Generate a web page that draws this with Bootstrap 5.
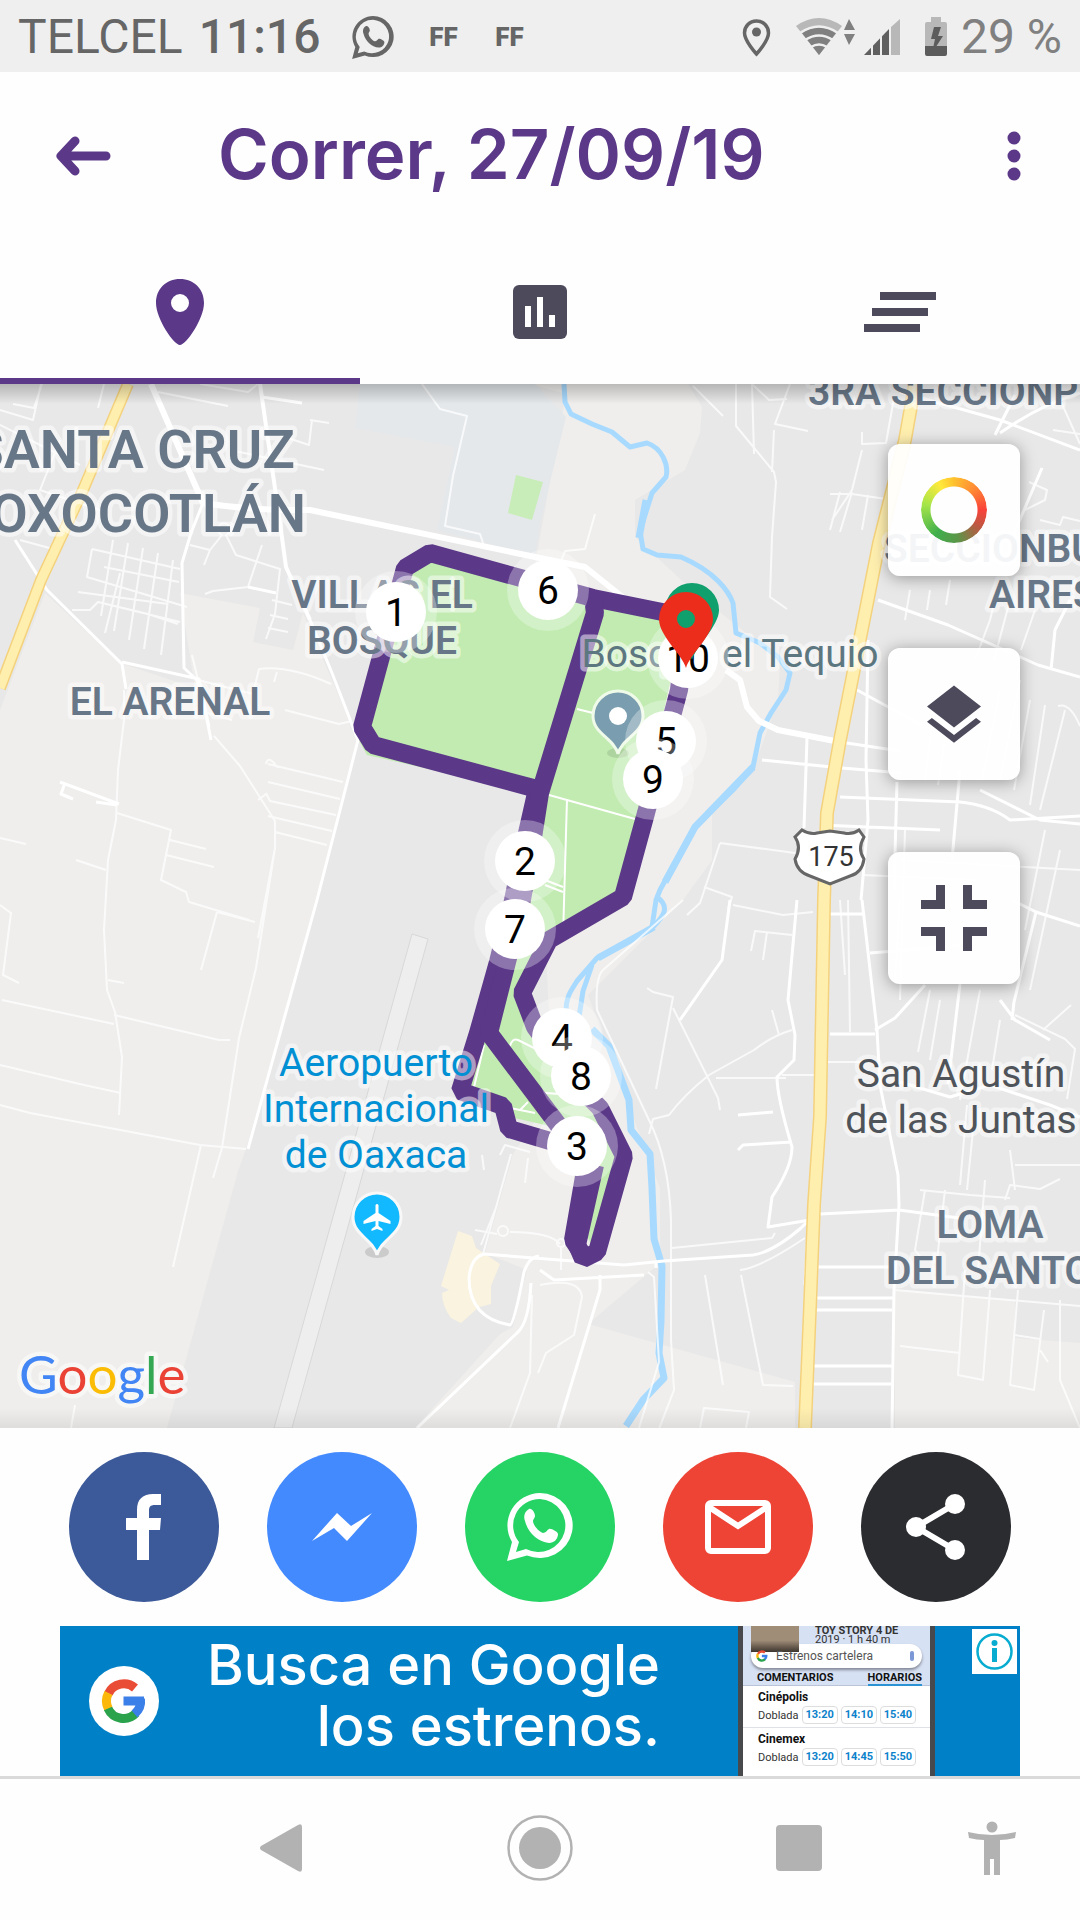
<!DOCTYPE html>
<html lang="es">
<head>
    <meta charset="UTF-8" />
    <meta name="viewport" content="width=device-width, initial-scale=1.0" />
    <title>Correr, 27/09/19</title>
    <link href="https://cdn.jsdelivr.net/npm/bootstrap@5.3.3/dist/css/bootstrap.min.css" rel="stylesheet">
    <style>
        :root {
            --morado: #5b3888;
            --tinta: #4d4a5c;
        }

        body {
            font-family: Roboto, sans-serif;
            background-color: #fefefe;
            overflow-x: hidden;
        }

        svg {
            display: block;
            flex-shrink: 0;
        }

        /* Barra de estado */
        .estado {
            height: 72px;
            padding: 2px 18px 0;
            background-color: #efefef;
            color: #666;
            font-size: 48px;
            line-height: 70px;
        }

        .estado .reloj {
            margin: 0 32px 0 16px;
            font-weight: 500;
        }

        .estado .app-ff {
            margin-left: 32px;
            width: 34px;
            font-size: 26px;
            font-weight: 900;
            text-align: center;
        }

        .estado .bateria {
            margin-left: 13px;
            color: #808080;
        }

        /* Encabezado */
        .encabezado {
            height: 168px;
            padding: 0 57px 0 55px;
            color: var(--morado);
        }

        .encabezado h1 {
            margin: 0 auto 4px 107px;
            font-family: Inter, sans-serif;
            font-size: 69px;
            font-weight: 600;
            line-height: 80px;
        }

        .boton-liso {
            padding: 0;
            border: 0;
            background: none;
            color: inherit;
        }

        .pestanas .nav-link {
            height: 144px;
            padding: 6px 0 0;
            border-bottom: 6px solid transparent;
            border-radius: 0;
            color: var(--tinta);
        }

        .pestanas .nav-link.active {
            background: none;
            border-color: var(--morado);
            color: var(--morado);
        }

        /* Mapa */
        .mapa {
            min-height: 900px;
            overflow: hidden;
            background-color: #e8e8e8;
        }

        .mapa::after {
            content: "";
            position: absolute;
            inset: 0;
            pointer-events: none;
            background: linear-gradient(rgba(0, 0, 0, .22), transparent 20px, transparent calc(100% - 20px), rgba(0, 0, 0, .07));
        }

        .lienzo {
            position: absolute;
            width: 100%;
            height: 100%;
        }

        .lienzo text {
            font-size: 39px;
            text-anchor: middle;
            paint-order: stroke;
            stroke: rgba(255, 255, 255, .5);
            stroke-width: 9px;
            stroke-linejoin: round;
        }

        .lienzo .colonia {
            fill: #687788;
            font-weight: 600;
        }

        .lienzo .ciudad {
            font-size: 54px;
            text-anchor: end;
        }

        .lienzo .inicio {
            text-anchor: start;
        }

        .lienzo .km text,
        .lienzo .ruta175 {
            stroke: none;
        }

        .lienzo .ruta175 {
            font-size: 27px;
            fill: #333;
        }

        .lienzo .logo {
            font-family: Lato, sans-serif;
            font-size: 53px;
            text-anchor: start;
        }

        .controles {
            position: absolute;
            top: 60px;
            right: 60px;
            gap: 72px;
            z-index: 1;
        }

        .controles .btn {
            width: 132px;
            height: 132px;
            border: 0;
            border-radius: 12px;
            background-color: rgba(255, 255, 255, .93);
            box-shadow: 0 2px 16px rgba(0, 0, 0, .35);
            color: var(--tinta);
        }

        .aro {
            width: 66px;
            height: 66px;
            border-radius: 50%;
            background: conic-gradient(#ffc12e, #ff8a34 12%, #f9423a 25%, #b95a43 35%, #5b9648 48%, #3fae4c 60%, #a5e549 78%, #ffe93b 92%, #ffc12e);
            -webkit-mask: radial-gradient(closest-side, transparent 23px, #000 24px);
            mask: radial-gradient(closest-side, transparent 23px, #000 24px);
        }

        /* Compartir */
        .compartir {
            gap: 48px;
            padding: 24px 0;
        }

        .compartir .btn {
            width: 150px;
            height: 150px;
            border: 0;
            color: #fff;
        }

        .c-facebook { background-color: #3c5a99; }
        .c-messenger { background-color: #448aff; }
        .c-whatsapp { background-color: #26d466; }
        .c-correo { background-color: #ee4435; }
        .c-otros { background-color: #2b2c30; }

        /* Anuncio */
        .anuncio {
            height: 150px;
            margin: 0 60px;
            padding: 0 85px 0 29px;
            overflow: hidden;
            background-color: #0080c6;
            color: #fff;
        }

        .anuncio .lema {
            margin: 0 78px 10px auto;
            font-family: Inter, sans-serif;
            font-size: 56px;
            font-weight: 500;
            line-height: 61px;
        }

        .anuncio .info {
            position: absolute;
            top: 3px;
            right: 3px;
            width: 45px;
            height: 45px;
            background-color: #fff;
        }

        .telefono {
            width: 197px;
            border: solid #48494d;
            border-width: 0 5px;
            background-color: #fff;
            color: #111;
            font-size: 12px;
            line-height: 18px;
        }

        .telefono .cabecera {
            height: 60px;
            background-color: #d7e1f4;
            border-bottom: 1px solid #b9c4d8;
        }

        .telefono .foto {
            width: 48px;
            height: 26px;
            margin-left: 8px;
            background: linear-gradient(#a08d78 55%, #3d352e);
        }

        .telefono .buscador {
            height: 24px;
            margin: -8px 8px 0;
            padding: 0 8px 0 5px;
            border-radius: 12px;
            background-color: #fff;
            box-shadow: 0 2px 3px rgba(0, 0, 0, .4);
            color: #555;
        }

        .telefono .titulo {
            font-size: 11px;
            line-height: 9px;
            color: #333;
        }

        .telefono .fichas {
            padding: 4px 8px 0 14px;
            font-size: 11px;
            line-height: 12px;
        }

        .telefono .fichas .activa {
            border-bottom: 2px solid #2b93d3;
        }

        .telefono .cine {
            padding: 2px 14px 3px 15px;
        }

        .telefono .hora {
            width: 36px;
            border: 1px solid #ddd;
            border-radius: 4px;
            color: #0b82cb;
            font-size: 11px;
            font-weight: 700;
            line-height: 16px;
            text-align: center;
        }

        /* Barra de navegación del sistema */
        .sistema {
            display: grid;
            grid-template-columns: 14% 24% 24% 24% 14%;
            height: 144px;
            padding-bottom: 4px;
            border-top: 3px solid #dadada;
            color: #b2b2b2;
            place-items: center;
        }
    </style>
</head>
<body class="d-flex flex-column min-vh-100">

<div class="estado d-flex align-items-center">
    <span>TELCEL</span>
    <span class="reloj">11:16</span>
    <svg width="42" height="43" viewBox="0 0 66 68" fill="currentColor"><use href="#wa" /></svg>
    <span class="app-ff">FF</span>
    <span class="app-ff">FF</span>
    <svg class="ms-auto" width="206" height="44" viewBox="742 14 206 44">
        <path d="M756.500 20c-7 0-12 5.500-12 12 0 8 12 21 12 21s12-13 12-21c0-6.500-5-12-12-12z" fill="none" stroke="#666" stroke-width="3.500" />
        <circle cx="756.500" cy="31" r="4.500" fill="#666" />
        <path d="M819 54L796 25q23-16 46 0z" fill="#b8b8b8" />
        <path d="M819 54L802 32q17-11 34 0z" fill="#808080" />
        <path d="M800 32q19-13 38 0M805 39q14-9 28 0M811 46q8-5 16 0" fill="none" stroke="#efefef" stroke-width="2.500" />
        <path d="M844 29l5-11 6 11zM844 33h11l-6 11z" fill="#808080" />
        <path d="M864 54l25-26v26z" fill="#606060" />
        <path d="M891 26l9-8v36h-9z" fill="#b8b8b8" />
        <path d="M872 40v14M881 30v24" stroke="#efefef" stroke-width="2" />
        <path d="M931 16h10v5h4q2 0 2 2v22h-22V23q0-2 2-2h4z" fill="#b8b8b8" />
        <path d="M925 45h22v8q0 2-2 2h-18q-2 0-2-2zM934 26h7l-3 9h5l-11 17 3-14h-4z" fill="#5c5c5c" />
    </svg>
    <span class="bateria">29 %</span>
</div>

<header class="encabezado d-flex align-items-center">
    <button type="button" class="boton-liso" aria-label="Volver">
        <svg width="56" height="42" viewBox="0 0 56 42" fill="none" stroke="currentColor" stroke-width="9" stroke-linecap="round" stroke-linejoin="round"><path d="M51 21H6M20 6L6 21l14 15" /></svg>
    </button>
    <h1>Correr, 27/09/19</h1>
    <button type="button" class="boton-liso" aria-label="Más opciones">
        <svg width="18" height="54" viewBox="0 0 18 54" fill="currentColor"><circle cx="9" cy="9" r="6.500" /><circle cx="9" cy="27" r="6.500" /><circle cx="9" cy="45" r="6.500" /></svg>
    </button>
</header>

<nav class="pestanas nav nav-justified" aria-label="Secciones">
    <a href="#mapa" class="nav-link active d-flex align-items-center justify-content-center" aria-label="Mapa">
        <svg width="48" height="66" viewBox="0 0 48 66" fill="currentColor"><path fill-rule="evenodd" d="M24 0C10 0 0 10 0 24c0 16 18 42 24 42s24-26 24-42C48 10 38 0 24 0zm0 15a9 9 0 1 1 0 18 9 9 0 0 1 0-18z" /></svg>
    </a>
    <a href="#graficas" class="nav-link d-flex align-items-center justify-content-center" aria-label="Gráficas">
        <svg width="54" height="54" viewBox="0 0 54 54"><rect width="54" height="54" rx="6" fill="currentColor" /><path d="M12 21h6v21h-6zM24 12h6v30h-6zM36 30h6v12h-6z" fill="#fff" /></svg>
    </a>
    <a href="#vueltas" class="nav-link d-flex align-items-center justify-content-center" aria-label="Vueltas">
        <svg width="72" height="40" viewBox="0 0 72 40" fill="currentColor"><path d="M16 0h56v8H16zM8 16h56v8H8zM0 32h56v8H0z" /></svg>
    </a>
</nav>

<main id="mapa" class="mapa position-relative flex-fill">
    <svg class="lienzo" viewBox="0 384 1080 1044" preserveAspectRatio="xMidYMid slice">
        <defs>
            <g id="wa">
                <path fill-rule="evenodd" d="M33 0A33 32.500 0 0 0 5 49L0 68l20-5.500A33 32.500 0 1 0 33 0zm0 6a27 26.500 0 1 1-14 50l-10 3 3-10A27 26.500 0 0 1 33 6z" />
                <path d="M22 16c-4 2-6 7-4 12 3 12 13 21 24 22 5 0 9-4 9-9 0-2-7-6-9-5-2 1-3 4-6 4-4-1-10-8-10-12 0-2 2-3 2-5 0-3-3-8-6-7z" />
            </g>
            <g id="g-google" fill="none" stroke-width="9">
                <path d="M7.500 15.500A17 17 0 0 1 34 10" stroke="#ea4d35" />
                <path d="M7.500 31A17 17 0 0 1 7.500 15" stroke="#fbb80b" />
                <path d="M35 35A17 17 0 0 1 7 30.500" stroke="#2ba24c" />
                <path d="M22.500 23H43M39.500 21A17 17 0 0 1 33.500 36" stroke="#3b7fe8" />
            </g>
        </defs>

        <!-- terreno -->
        <g fill="#efeeec">
            <path d="M0 710L45 593l75 70 75 25-15-95 80 15-7 34 40 8 10-37 55 127-41 160-71 249-8 22-71 257H0z" />
            <path d="M530 384h158l14 23-2 26-15 37-50 30v37l57 53 88 70-2 40-25 70-41 43v47l-29 40-95 95 45 122 27 71v75l-72 61 207 58v46H415l85-94 13-7 14-57-42-17 28-99 40-60-10-200 100-250-108-80 31-170z" />
            <path d="M895 1290l120 10v38l65 5v85H895z" />
        </g>
        <path d="M360 384h175l31 33-26 106-5 33-98-26 18-83-100-19z" fill="#e4e8eb" />
        <path d="M516 475l27 7-11 38-24-7z" fill="#c8edb9" />
        <path d="M458 1231l14 5 4 12 24 16-9 22v18l-12 3-18 16-10-5q-9-12-9-25l7-3-8-4z" fill="#faf3df" />
        <path d="M412 934l16 5-136 489h-18z" fill="#eee" stroke="#d8d8d8" />

        <!-- bosque -->
        <path d="M396 568l34-16 163 46 92 17-62 282-74 43-27 53 18 40 45 65 38 65-30 85-10-20-16-98-70-16-45-25 30-60 48-237-163-37-10-18z" fill="#c1ebb0" />

        <!-- río -->
        <g fill="none" stroke="#a8daff" stroke-linejoin="round">
            <path stroke-width="5" d="M564 384l1 18 6 12 21 10 20 8 18 15 17-4c15 5 22 22 19 34l-14 16-12 38 3 18 14 6 24 2c35 15 48 35 52 46l3 30 24 10 18 14 12 16-4 17-15 23-11 20-7 34-20 23-38 37-17 30-18 33-4 10-4 27-27 17-28 14-20 23c-6 10-11 15-11 30M657 897c14 10 6 20-4 30M592 965l-9 26-4 26" />
            <path stroke-width="7" d="M646 500l-7 38M753 767l-58 60-30 55M654 927l-56 31M592 1029l17 17 20 54 2 30 19 24 2 34 2 51 8 27-1 55-2 32 5 25-21 22-17 26" />
        </g>

        <!-- calles -->
        <g fill="none" stroke="#fff" stroke-linejoin="round">
            <g stroke-width="6">
                <path d="M151 384l52 119q50 8 107 7l230 48 45 9 50 40 60 16M726 670l14 10 7 27 12 14 19 9 62 12" />
                <path d="M260 384l20 139 6 44 24 53" stroke-width="4" />
            </g>
            <g stroke-width="3">
                <path d="M310 620l22 53 26 67-41 160-69 249M15 540l32 50 75 74 4 25M122 662l77 17 10 48M203 503l-12 30-9 30 2 105 13 12 8 30 6 30M60 782l59 22M65 783l-4 11 12 5M96 802l21 3M248 587l28 6M262 397l40 6M202 496l8 20" />
                <path d="M417 1428l100-95q12-10 14-50M484 1254l140 11 40-4 89-6q20-3 48-27l10-10M484 1254q-13 3-15 24 0 40 41 47 4 0 14-53 5-15 15-16M540 1270l14 10 90-5M600 1275v15l-42 138M656 1262v6" />
                <path d="M730 900l-8 60-42 60M797 900l-9 100 7 35-1 25-17 17q0 20 15 70 0 20-20 50l-4 30 42-7M862 900l15 130 3 55 18 90 1 30-5 85-2 138M830 1034h45M830 914h35M820 1214l79-4 60 8M816 1267h77M816 1298h77M815 1310h77M812 1366h80M811 1384h82" />
                <path d="M875 1030l20-12 30-33M870 953l50-4 40-4M900 1082l50 15 40-12 60 20 30 12M1012 900l24 12 44 14M1036 912l-22 90-2 18M960 984l-12 100M1000 1000l15 20 35 20M738 1115l35-3M738 1150l5-5 49-3M808 1230l-3 55" />
                <path d="M840 742l60 9M878 600l70 25 90 40 42 12M868 640l-2 120 2 60-7 80M857 690l70 38M840 797l120 5q30 3 50 18l70-4M820 825l120 5M762 760l80 8 60 5M807 738l-3 90M897 782l-3 108M960 770l-8 90M980 790l60 30 40 4M1042 468l-30 70M1080 450l-80-30-100-28M912 384l-10 70-30 130M1000 433q40-28 80-40M995 435l20-40M1070 600l-15 30-4 40" />
            </g>
            <g stroke-width="2" opacity=".75">
                <path d="M0 410l33 10 8-36M13 404l21 4 8-24M104 384l-6 24M0 425l80 40M158 392l70 14M200 384l48 8 10-8M310 420l19 3M312 420l-3 25-30-10M230 450l94 20M60 440l-20 50 60 20M20 540l33 9" />
                <path d="M92 549l88 20M92 549l-5 28 100 30M104 567l75 15M98 602l82 20M113 540l-12 76M128 543l-14 88M143 548l-14 92M158 553l-14 96M173 560l-12 95M78 592l90 12M72 610h18l8-8 50 12 30 10M120 573l-15 60M190 545l20 5 12-15a6 6 0 1 1 4 0l10 20 44 14-5 45-9 25M210 550l-6 15M262 545l-14 42-35 4-8 3M272 600l20 5M270 615l18 4M268 628l20 4" />
                <path d="M232 720l-28-8M192 655l6 25 55 14 6-25q30-4 72 15M277 672l-3 10M285 710l54 14 13-3M124 690v30l-6 50-2 50-8 40-4 70 3 60 8 22 7 45-3 58M214 736l26 30 35 55v27l-19 120-17 70-17 110-9 30M275 848l-17 90" />
                <path d="M268 764l75 18M268 782l72 17M266 793l4 8 66 14M268 816l64 15M275 832l52 13M266 764q2-10 12 4M258 800l8-6M117 813l54 17-10 50 25 12 3 10 60 18M170 840l36 9M166 855l48 12M76 860l30 10M0 838l26 6M0 905l11 8-8 62 16 8M2 1000l112 24M108 980l16 3M114 1015l105 25h11M0 1065l84 20 37 8M0 1105l30 8 170 32 46 4M201 1145l-28 122M217 912l38 10M217 912l-16 58M75 1405l-4 23" />
                <path d="M422 384l18 25 27 7-14 60-8 50 35 8 5 15M595 514l-10 35-20 2-6 15M693 386l30 30M736 384v42l38 46 2 10-4 55-2 60 17 12M752 384l2 70M752 384l17 16 18-1M790 384l-15 40 33 7M774 430l-2 42M862 450l-10 40-20 30M830 494h22l34 5M840 492l-10 38M852 492l-12 40M868 495l-6 35M862 432v12l24-1 8-45" />
                <path d="M1053 384l27 60M1053 430l27 4M1025 510l20-10 2-10-18-8M1040 520l20 5 3-8 17 4M910 590l-5 30M930 590l-3 20M950 580l-4 25M1000 580l-10 40-15 40M1010 600l-16 60M1035 610l-14 40M1000 690l-18 90M1020 680l-20 100M1030 700l-16 90M1045 705l-15 100M1065 710l-25 100M1058 706q12-4 22 20M935 700l-10 80M950 705l-12 80M900 860l180 10M905 830l-5 170M862 875l115 5M1060 850l-30 140M1045 830l-20 100" />
                <path d="M720 843l-20 60-13 12M720 843l75 10M704 887l28 10-4 12M733 905l50 10 30-3M792 935l-37-4-4 20M767 932l-4 28M840 900l5 75M848 900l2 132M647 988l6 4 20 5-17 92M673 1008l45 90 2 12M772 1010l7 25M792 1030q-20 6-38 20l-45 25q-25 20-40 40l-16 4-4 15M716 1078h70M782 1075h33M825 1062h38M683 900l-80 70q-8 8-6 40l52 110q20 40 22 100v120l3 50-30 78M672 1248l100-10 3-5M648 1272l6 5 5 85-20 66M705 1275l18 110M741 1275l22 110 30 1M740 1270q20-2 65-32" />
                <path d="M500 1155l5-10 25 7M511 1154l-28 100M484 1170l-2-15M497 1205l-16 40M475 1230l22 4M510 1232q40 0 50 12M561 1248v22M525 1183l3-25M540 1285q40-8 42 12l-8 38-28 18-8 20M510 1428l20-55 2-78M900 900l-5 80M930 990l-12 62M940 1000l-10 60M980 990l-20 110M967 1105l-7 80M975 1110l-8 80M1015 1015l50 24 10 10-8 50M1043 1030l28-25M1000 1020l-8 50M920 1190l50 5 40 3M925 1190l-10 60 8 10M945 1190l-8 70M985 1180l-7 90M1005 1200l5-15 30 4 20-10M1015 1165h65M1010 1150l5 40M965 1270l-7 105 25 5 7-90M1018 1290l-8 95 24 5 10-80M900 1346l60 7M1015 1335l25 4M895 1290l185 16M1060 1300v80l20 48M700 1428l4-20 45 4-3 16M1040 1350l8 12" />
                <circle cx="503" cy="1231" r="5" /><circle cx="561" cy="1243" r="4" />
            </g>
            <path stroke-width="2" d="M577 709l16 4M549 795l86 24M567 799l-4 138M545 880l18 7M545 885l18 7M510 1046q2-8 8-6l40 20M484 1045l-10 42M510 1108l25 5M530 1092l30 2M520 1110l8-8" />
        </g>

        <!-- carreteras -->
        <g fill="none">
            <path d="M128 384L83 490 41 580 0 688" stroke="#f4d27d" stroke-width="12" />
            <path d="M128 384L83 490 41 580 0 688" stroke="#ffefaf" stroke-width="9" />
            <path d="M915 384l-10 56-26 103-39 197-13 73-3 87-4 217-6 88-4 102-5 121" stroke="#f4d27d" stroke-width="14" />
            <path d="M915 384l-10 56-26 103-39 197-13 73-3 87-4 217-6 88-4 102-5 121" stroke="#ffefaf" stroke-width="11" />
        </g>
        <path d="M802 830q8 5 15 3l13-2 14 2q8 2 15-3l5 7q-7 12 0 22-2 14-14 17l-20 8-20-8q-13-4-15-17 7-12 0-22z" fill="#fff" stroke="#666" stroke-width="3" />
        <text class="ruta175" x="831" y="866">175</text>

        <!-- recorrido -->
        <g fill="none" stroke="#5b3888" stroke-width="18" stroke-linejoin="bevel">
            <path d="M687 617L593 598 430 553 405 568 362 727 373 745 537 789 525 842 512 905 498 962 478 1033 460 1091 503 1106 509 1129 577 1149" />
            <path d="M593 598L595 613 540 793 531 850 521 905 507 962 489 1033 577 1150" />
            <path d="M687 617L679 690 646 813 623 897 549 940 522 993 535 1027 577 1085 600 1108 624 1156 597 1252 583 1259 577 1245 595 1165" />
            <path d="M586 1165L573 1240 581 1252" />
        </g>

        <!-- nombres -->
        <text class="colonia ciudad" x="295" y="468">SANTA CRUZ</text>
        <text class="colonia ciudad" x="306" y="532">XOXOCOTLÁN</text>
        <text class="colonia" x="382" y="608">VILLAS EL</text>
        <text class="colonia" x="382" y="654">BOSQUE</text>
        <text class="colonia" x="170" y="715">EL ARENAL</text>
        <text class="colonia inicio" x="808" y="405">3RA SECCIONP</text>
        <text class="colonia inicio" x="884" y="562">SECCIONBUENOS</text>
        <text class="colonia inicio" x="989" y="608">AIRES</text>
        <text class="colonia" x="990" y="1238">LOMA</text>
        <text class="colonia inicio" x="886" y="1284">DEL SANTO</text>
        <g fill="#4f545a">
            <text x="961" y="1087">San Agustín</text>
            <text x="961" y="1133">de las Juntas</text>
        </g>
        <g fill="#0290d4">
            <text x="376" y="1076">Aeropuerto</text>
            <text x="376" y="1122">Internacional</text>
            <text x="376" y="1168">de Oaxaca</text>
        </g>
        <text x="730" y="667" fill="#5d7781">Bosque el Tequio</text>

        <ellipse cx="618" cy="753" rx="11" ry="5" fill="#000" opacity=".1" />
        <path d="M618 754c-4-16-25-20-25-38a25 25 0 0 1 50 0c0 18-21 22-25 38z" fill="#7a9eaf" stroke="#effae9" stroke-width="3" />
        <circle cx="618" cy="716" r="9" fill="#fff" />
        <ellipse cx="377" cy="1252" rx="12" ry="6" fill="#000" opacity=".12" />
        <path d="M377 1255c-4-16-24-20-24-38a24 24 0 0 1 48 0c0 18-20 22-24 38z" fill="#12b9ff" stroke="#f8f8f8" stroke-width="3" />
        <path d="M375.500 1205q1.500-2 3 0v8l12 8v3l-12-3v5l4 3v2l-5.500-2-5.500 2v-2l4-3v-5l-12 3v-3l12-8z" fill="#fff" />

        <!-- kilómetros -->
        <g class="km" id="kilometros"></g>
        <path d="M692 660c-4-14-27-34-27-50a27 27 0 0 1 54 0c0 16-23 36-27 50z" fill="#0fa06e" />
        <path fill-rule="evenodd" d="M686 668c-4-14-27-32-27-49a27 27 0 0 1 54 0c0 17-23 35-27 49zm0-58a9 9 0 1 0 0 18 9 9 0 0 0 0-18z" fill="#ec2d1c" />

        <text class="logo" x="19" y="1394"><tspan fill="#4285f4">G</tspan><tspan fill="#ea4335">o</tspan><tspan fill="#fbbc05">o</tspan><tspan fill="#4285f4">g</tspan><tspan fill="#34a853">l</tspan><tspan fill="#ea4335">e</tspan></text>
    </svg>

    <div class="controles d-flex flex-column">
        <button type="button" class="btn d-flex align-items-center justify-content-center" aria-label="Colores del recorrido"><span class="aro"></span></button>
        <button type="button" class="btn d-flex align-items-center justify-content-center" aria-label="Capas">
            <svg width="72" height="72" viewBox="0 -.5 24 24" fill="currentColor"><path d="M12 18.540l-7.370-5.730L3 14.070l9 7 9-7-1.630-1.270zM12 16l9-7-9-7-9 7z" /></svg>
        </button>
        <button type="button" class="btn d-flex align-items-center justify-content-center" aria-label="Salir de pantalla completa">
            <svg width="66" height="66" viewBox="0 0 66 66" fill="currentColor"><path d="M15 0h9v24H0v-9h15zM42 0h9v15h15v9H42zM0 42h24v24h-9V51H0zM42 42h24v9H51v15h-9z" /></svg>
        </button>
    </div>
</main>

<section class="compartir d-flex justify-content-center" aria-label="Compartir">
    <button type="button" class="btn rounded-circle c-facebook d-flex align-items-center justify-content-center" aria-label="Facebook">
        <svg width="36" height="66" viewBox="0 0 36 66" fill="currentColor"><path d="M11 66V36H0V24h11v-8C11 5 17 0 27 0h8v11h-6c-5 0-6 2-6 6v7h12l-1 12H23v30z" /></svg>
    </button>
    <button type="button" class="btn rounded-circle c-messenger d-flex align-items-center justify-content-center" aria-label="Messenger">
        <svg width="60" height="28" viewBox="0 0 60 28" fill="currentColor"><path d="M0 28L25 0l14 13L60 0 35 28 22 15z" /></svg>
    </button>
    <button type="button" class="btn rounded-circle c-whatsapp d-flex align-items-center justify-content-center" aria-label="WhatsApp">
        <svg width="66" height="68" viewBox="0 0 66 68" fill="currentColor"><use href="#wa" /></svg>
    </button>
    <button type="button" class="btn rounded-circle c-correo d-flex align-items-center justify-content-center" aria-label="Correo">
        <svg width="66" height="54" viewBox="0 0 66 54" fill="none" stroke="currentColor" stroke-width="6"><rect x="3" y="3" width="60" height="48" rx="3" /><path d="M4 7l29 19L62 7" /></svg>
    </button>
    <button type="button" class="btn rounded-circle c-otros d-flex align-items-center justify-content-center" aria-label="Más">
        <svg width="60" height="66" viewBox="0 0 60 66" fill="currentColor"><path d="M49 10L10 33l39 23" fill="none" stroke="currentColor" stroke-width="6" /><circle cx="49" cy="10" r="10" /><circle cx="10" cy="33" r="10" /><circle cx="49" cy="56" r="10" /></svg>
    </button>
</section>

<aside class="anuncio position-relative d-flex align-items-center">
    <svg width="70" height="70" viewBox="-12 -12 70 70"><circle cx="23" cy="23" r="35" fill="#fff" /><use href="#g-google" /></svg>
    <p class="lema text-end">Busca en Google<br>los estrenos.</p>
    <div class="telefono align-self-stretch">
        <div class="cabecera">
            <div class="d-flex gap-3">
                <div class="foto"></div>
                <div class="titulo"><b>TOY STORY 4 DE</b><br>2019 · 1 h 40 m</div>
            </div>
            <div class="buscador d-flex align-items-center gap-2">
                <svg width="12" height="12" viewBox="0 0 46 46"><use href="#g-google" /></svg>
                <span class="me-auto">Estrenos cartelera</span>
                <svg width="4" height="10" viewBox="0 0 4 10"><rect width="4" height="10" rx="2" fill="#7b97d6" /></svg>
            </div>
            <div class="fichas d-flex justify-content-between">
                <b>COMENTARIOS</b>
                <b class="activa">HORARIOS</b>
            </div>
        </div>
        <div class="cine">
            <b>Cinépolis</b>
            <div class="d-flex justify-content-between"><span class="titulo align-self-center">Doblada</span><span class="hora">13:20</span><span class="hora">14:10</span><span class="hora">15:40</span></div>
        </div>
        <div class="cine border-top">
            <b>Cinemex</b>
            <div class="d-flex justify-content-between"><span class="titulo align-self-center">Doblada</span><span class="hora">13:20</span><span class="hora">14:45</span><span class="hora">15:50</span></div>
        </div>
    </div>
    <a href="#anuncio" class="info d-flex align-items-center justify-content-center" aria-label="Información del anuncio">
        <svg width="37" height="37" viewBox="0 0 37 37" fill="#07acd0"><circle cx="18.500" cy="18.500" r="17" fill="none" stroke="#07acd0" stroke-width="2.500" /><circle cx="18.500" cy="10" r="3" /><path d="M16 15h5v14h-5z" /></svg>
    </a>
</aside>

<footer class="sistema">
    <span></span>
    <button type="button" class="boton-liso" aria-label="Atrás">
        <svg width="42" height="48" viewBox="0 0 42 48" fill="currentColor"><path d="M38 1q4-2 4 2v42q0 4-4 2L1 26q-2-2 0-4z" /></svg>
    </button>
    <button type="button" class="boton-liso" aria-label="Inicio">
        <svg width="66" height="66" viewBox="0 0 66 66" fill="currentColor"><circle cx="33" cy="33" r="31.500" fill="none" stroke="currentColor" stroke-width="2.500" /><circle cx="33" cy="33" r="21" /></svg>
    </button>
    <button type="button" class="boton-liso" aria-label="Recientes">
        <svg width="46" height="46" viewBox="0 0 46 46" fill="currentColor"><rect width="46" height="46" rx="4" /></svg>
    </button>
    <button type="button" class="boton-liso me-4" aria-label="Accesibilidad">
        <svg width="48" height="54" viewBox="0 0 48 54" fill="currentColor"><circle cx="24" cy="6" r="5.500" /><path d="M0 11q24 6 48 0l-1 6q-8 2-15 2v35h-6V38h-4v16h-6V19q-7 0-15-2z" /></svg>
    </button>
</footer>

<script src="https://cdn.jsdelivr.net/npm/bootstrap@5.3.3/dist/js/bootstrap.bundle.min.js"></script>
<script>
    const kilometros = [
        [396, 612], [525, 861], [577, 1146], [562, 1038], [666, 741],
        [548, 590], [515, 929], [581, 1076], [653, 779], [688, 658]
    ];

    document.getElementById("kilometros").innerHTML = kilometros.map(([x, y], i) => `
        <circle cx="${x}" cy="${y}" r="41" fill="#fff" fill-opacity=".3" />
        <circle cx="${x}" cy="${y}" r="30" fill="#fff" />
        <text x="${x}" y="${y + 14}">${i + 1}</text>
    `).join("");
</script>
</body>
</html>
